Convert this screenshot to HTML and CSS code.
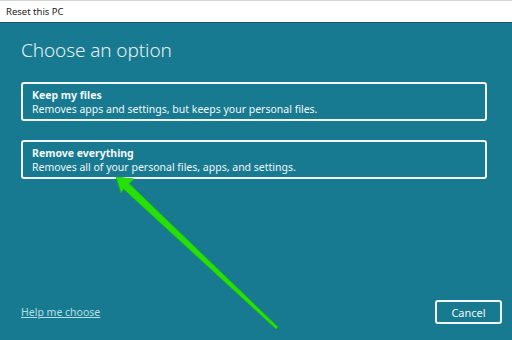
FILE: index.html
```html
<!DOCTYPE html>
<html>
<head>
<meta charset="utf-8">
<link rel="stylesheet" href="styles.css">
</head>
<body>
<div class="window">
  <div class="titlebar">Reset this PC</div>
  <div class="content">
    <h1 class="heading">Choose an option</h1>
    <div class="options">
      <div class="option">
        <div class="option-title">Keep my files</div>
        <div class="option-desc">Removes apps and settings, but keeps your personal files.</div>
      </div>
      <div class="option">
        <div class="option-title">Remove everything</div>
        <div class="option-desc">Removes all of your personal files, apps, and settings.</div>
      </div>
    </div>
  </div>
  <div class="footer">
    <a class="help" href="#">Help me choose</a>
    <button class="cancel">Cancel</button>
  </div>
  <svg class="arrow" width="512" height="340" viewBox="0 0 512 340">
    <polygon points="116,177 134,179 129,183.5 278,327 276,329 123.5,189 121,193" fill="#27e00a" stroke="#1fb80a" stroke-width="0.8" stroke-linejoin="round"/>
  </svg>
</div>
</body>
</html>
```

FILE: styles.css
```css
* { box-sizing: border-box; }
html, body { margin: 0; padding: 0; }
body {
  width: 512px;
  height: 340px;
  overflow: hidden;
  font-family: "Noto Sans", "Open Sans", sans-serif;
  background: #187a90;
}
.window {
  position: relative;
  width: 512px;
  height: 340px;
  display: flex;
  flex-direction: column;
  background: #187a90;
}
.titlebar {
  height: 23px;
  background: #ffffff;
  border-top: 1px solid #d4d4d4;
  border-bottom: 1px solid #15566a;
  font-size: 9.5px;
  color: #222;
  padding: 4px 0 0 6px;
  line-height: 14px;
}
.content {
  flex: 1;
  padding: 0 25px 0 21px;
}
.heading {
  margin: 14px 0 0 0;
  font-size: 19px;
  font-weight: 300;
  line-height: 26px;
  color: #e6f1f4;
  letter-spacing: -0.1px;
}
.options {
  margin-top: 19px;
  display: flex;
  flex-direction: column;
  gap: 19px;
}
.option {
  height: 39px;
  border: 2px solid #f2f6f7;
  border-radius: 3px;
  padding: 4px 0 0 9px;
  color: #f2f7f8;
}
.option-title {
  font-weight: 700;
  font-size: 10.5px;
  line-height: 14px;
}
.option-desc {
  font-size: 10.5px;
  line-height: 15px;
}
.footer {
  height: 40px;
  margin-bottom: 8px;
  display: flex;
  align-items: center;
  justify-content: space-between;
  padding: 0 10px 0 21px;
}
.help {
  color: #b5e0ea;
  font-size: 10.5px;
  text-decoration: underline;
}
.cancel {
  width: 67px;
  height: 24px;
  border: 2px solid #f2f6f7;
  border-radius: 3px;
  background: transparent;
  color: #f2f7f8;
  font-family: "Noto Sans", "Open Sans", sans-serif;
  font-size: 11px;
  padding: 0;
}
.arrow {
  position: absolute;
  left: 0;
  top: 0;
  pointer-events: none;
}
```
